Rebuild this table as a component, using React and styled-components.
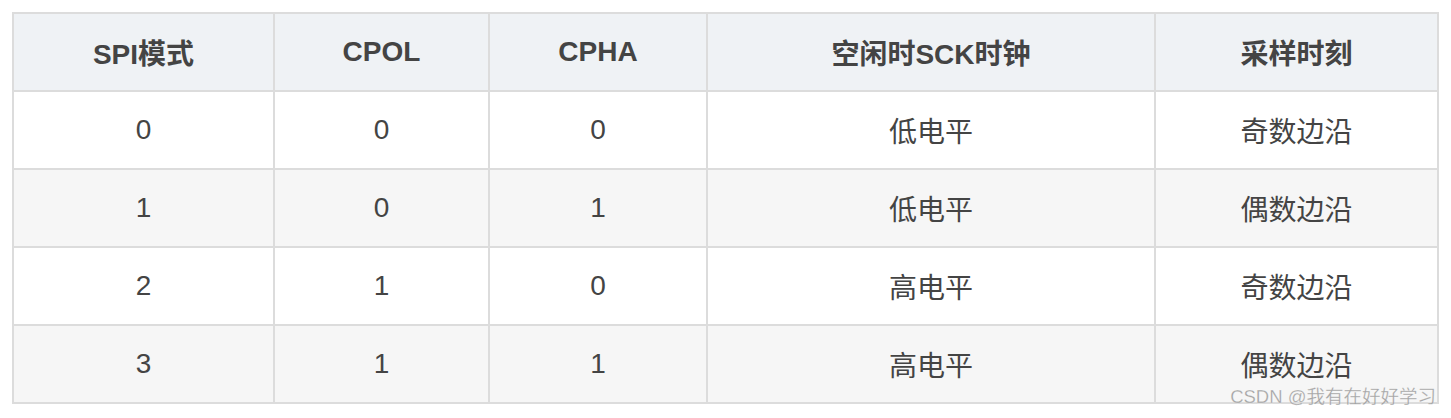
import styled, { createGlobalStyle } from 'styled-components';

const GlobalStyle = createGlobalStyle`
  body {
    margin: 0;
    background: #ffffff;
    font-family: 'Liberation Sans', 'Noto Sans CJK SC', sans-serif;
  }
`;

const columns = [
  { title: 'SPI模式', width: 261 },
  { title: 'CPOL', width: 215 },
  { title: 'CPHA', width: 218 },
  { title: '空闲时SCK时钟', width: 448 },
  { title: '采样时刻', width: 283 },
];

const rows = [
  ['0', '0', '0', '低电平', '奇数边沿'],
  ['1', '0', '1', '低电平', '偶数边沿'],
  ['2', '1', '0', '高电平', '奇数边沿'],
  ['3', '1', '1', '高电平', '偶数边沿'],
];

export default function App() {
  return (
    <>
      <GlobalStyle />
      <Page>
        <Table>
          <colgroup>
            {columns.map((c) => (
              <col key={c.title} style={{ width: c.width }} />
            ))}
          </colgroup>
          <thead>
            <HeadRow>
              {columns.map((c) => (
                <HeadCell key={c.title}>{c.title}</HeadCell>
              ))}
            </HeadRow>
          </thead>
          <tbody>
            {rows.map((r, i) => (
              <BodyRow key={i} $striped={i % 2 === 1}>
                {r.map((v, j) => (
                  <Cell key={j}>{v}</Cell>
                ))}
              </BodyRow>
            ))}
          </tbody>
        </Table>
        <Watermark>CSDN @我有在好好学习</Watermark>
      </Page>
    </>
  );
}

const Page = styled.div`
  position: relative;
  width: 1451px;
  height: 418px;
  padding: 12px 0 0 12px;
  box-sizing: border-box;
`;

const Table = styled.table`
  border-collapse: collapse;
  table-layout: fixed;
  width: 1425px;
  color: #444444;
  font-size: 28px;
`;

const HeadRow = styled.tr`
  height: 78px;
  background: #eff2f5;
`;

const HeadCell = styled.th`
  border: 2px solid #dcdcdc;
  text-align: center;
  font-weight: 700;
  padding: 0;
`;

const BodyRow = styled.tr`
  height: 78px;
  background: ${(props) => (props.$striped ? '#f6f6f6' : '#ffffff')};
`;

const Cell = styled.td`
  border: 2px solid #dcdcdc;
  text-align: center;
  padding: 0;
`;

const Watermark = styled.div`
  position: absolute;
  right: 15px;
  top: 386px;
  font-size: 18.5px;
  color: rgba(140, 140, 140, 0.75);
  -webkit-text-stroke: 0.3px rgba(255, 255, 255, 0.6);
  white-space: nowrap;
  line-height: 22px;
`;
